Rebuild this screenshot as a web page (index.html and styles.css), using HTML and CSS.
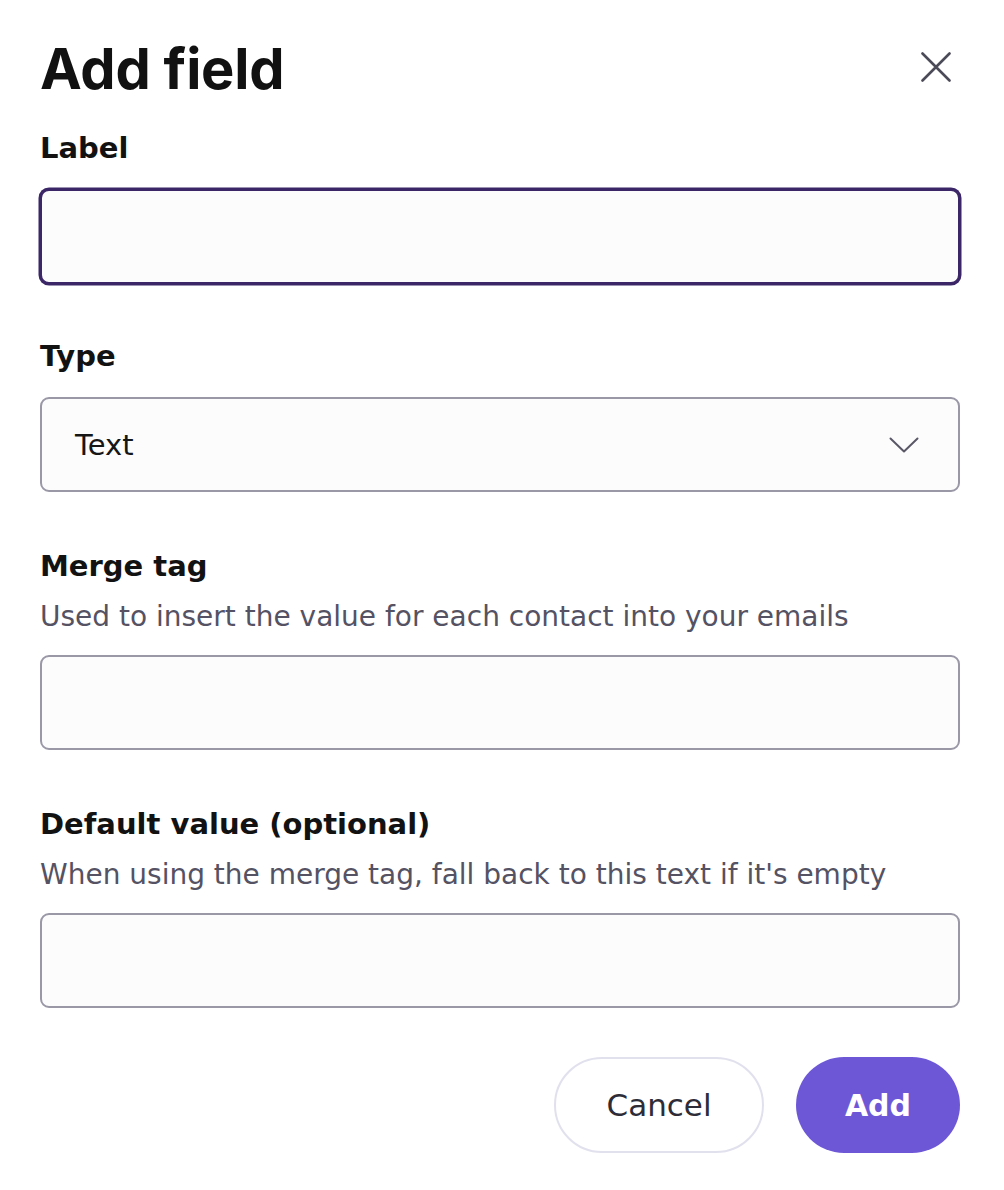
FILE: index.html
```html
<!DOCTYPE html>
<html lang="en">
<head>
<meta charset="utf-8">
<title>Add field</title>
<link rel="stylesheet" href="styles.css">
</head>
<body>
<div class="dialog">
  <div class="header">
    <h1 class="title">Add field</h1>
    <button class="close" type="button" aria-label="Close">
      <svg width="30" height="30" viewBox="0 0 30 30"><path d="M1.5 1.5 L28.5 28.5 M28.5 1.5 L1.5 28.5" stroke="#4b4a59" stroke-width="2.6" stroke-linecap="round" fill="none"/></svg>
    </button>
  </div>

  <div class="field first">
    <label class="label">Label</label>
    <div class="control focused"></div>
  </div>

  <div class="field type">
    <label class="label">Type</label>
    <div class="control select">
      <span class="value">Text</span>
      <svg class="chev" width="30" height="16" viewBox="0 0 30 16"><path d="M1.5 1.5 L15 14.5 L28.5 1.5" stroke="#5a5867" stroke-width="2" stroke-linecap="round" stroke-linejoin="round" fill="none"/></svg>
    </div>
  </div>

  <div class="field">
    <label class="label">Merge tag</label>
    <p class="help">Used to insert the value for each contact into your emails</p>
    <div class="control"></div>
  </div>

  <div class="field">
    <label class="label">Default value (optional)</label>
    <p class="help">When using the merge tag, fall back to this text if it's empty</p>
    <div class="control"></div>
  </div>

  <div class="actions">
    <button class="btn cancel" type="button">Cancel</button>
    <button class="btn add" type="button">Add</button>
  </div>
</div>
</body>
</html>
```

FILE: styles.css
```css
* { box-sizing: border-box; }
html, body { margin: 0; padding: 0; background: #ffffff; }
body { font-family: "DejaVu Sans", "Noto Sans", sans-serif; color: #111111; }

.dialog {
  width: 1004px;
  padding: 41px 44px 0 40px;
}

.header {
  display: flex;
  justify-content: space-between;
  align-items: flex-start;
}

.title {
  margin: 0;
  font-family: Inter, "Noto Sans", sans-serif;
  font-size: 56px;
  line-height: 56px;
  font-weight: 700;
  letter-spacing: -0.2px;
  color: #111111;
}

.close {
  margin: 11px 9px 0 0;
  padding: 0;
  border: 0;
  background: none;
  width: 30px;
  height: 30px;
  display: flex;
}

.field { margin-top: 58px; }
.field.first { margin-top: 35px; }
.field.type { margin-top: 56px; }

.label {
  display: block;
  font-size: 29px;
  line-height: 32px;
  font-weight: 700;
  color: #121212;
  margin-bottom: 25px;
}

.help {
  margin: -7px 0 21px 0;
  font-size: 28px;
  line-height: 34px;
  font-weight: 400;
  color: #545263;
}

.control {
  height: 95px;
  border: 2px solid #9a98a7;
  border-radius: 9px;
  background: #fcfcfc;
}

.control.focused {
  border-color: #3b2667;
  box-shadow: 0 0 0 1.5px #3b2667;
}

.select {
  display: flex;
  align-items: center;
  justify-content: space-between;
  padding: 0 39px 0 33px;
}

.value {
  font-size: 29px;
  color: #161616;
  font-weight: 400;
}

.actions {
  display: flex;
  justify-content: flex-end;
  gap: 32px;
  margin-top: 49px;
}

.btn {
  height: 96px;
  border-radius: 48px;
  font-family: "DejaVu Sans", "Noto Sans", sans-serif;
  font-size: 31px;
  font-weight: 400;
  padding: 0;
  cursor: pointer;
}

.cancel {
  width: 210px;
  background: #ffffff;
  border: 2px solid #e1e0ed;
  color: #2e2d37;
}

.add {
  width: 164px;
  background: #6e57d7;
  border: 0;
  color: #ffffff;
  font-weight: 700;
  font-size: 30px;
}
```
